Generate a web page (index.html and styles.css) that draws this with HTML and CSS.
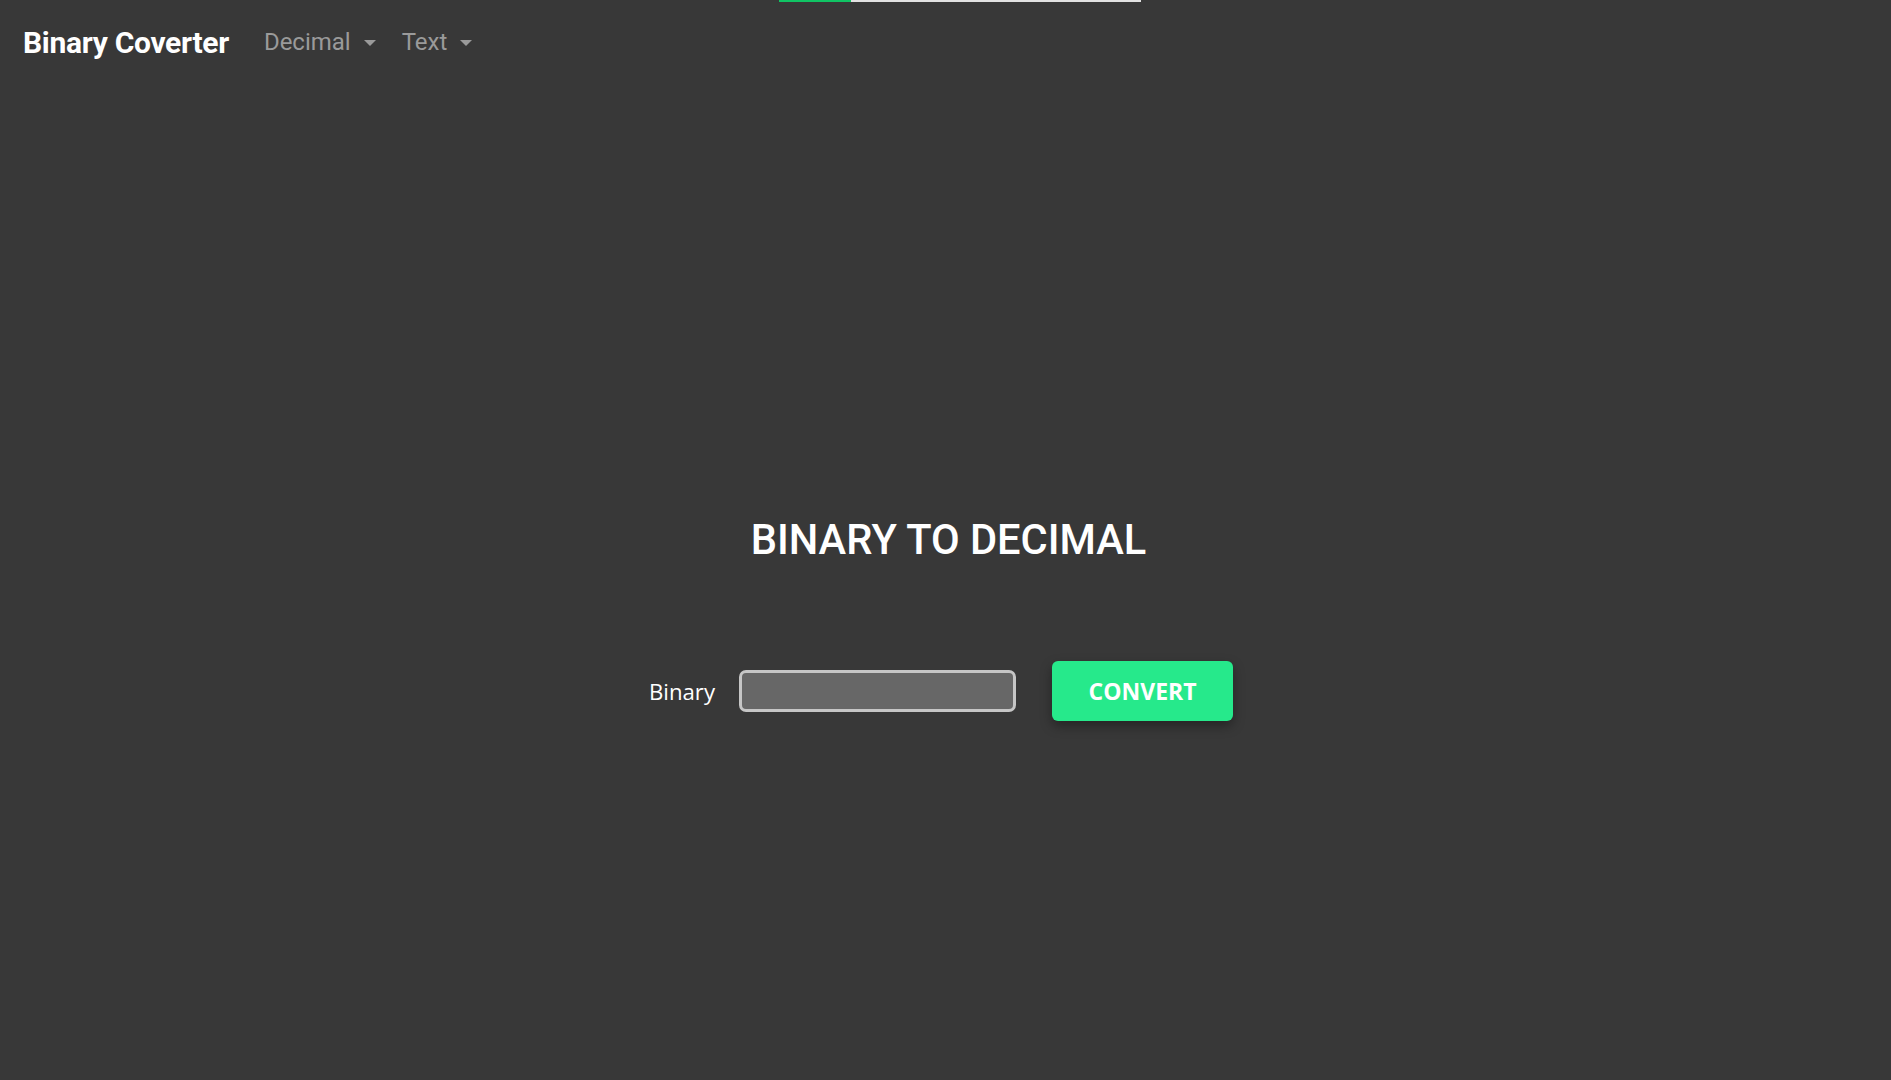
FILE: index.html
```html
<!DOCTYPE html>
<html lang="en">
<head>
<meta charset="utf-8">
<title>Binary Coverter</title>
<link rel="stylesheet" href="styles.css">
</head>
<body>
<div class="progress"><div class="progress-fill"></div></div>
<nav class="navbar">
  <a class="brand" href="#">Binary Coverter</a>
  <ul class="nav">
    <li class="nav-item"><a class="nav-link" href="#">Decimal<span class="caret"></span></a></li>
    <li class="nav-item"><a class="nav-link" href="#">Text<span class="caret"></span></a></li>
  </ul>
</nav>
<main class="main">
  <h1 class="title">BINARY TO DECIMAL</h1>
  <form class="form-row">
    <label class="label" for="bin">Binary</label>
    <input class="input" id="bin" type="text">
    <button class="btn" type="button">CONVERT</button>
  </form>
</main>
</body>
</html>
```
FILE: styles.css
```css
html, body {
  margin: 0;
  padding: 0;
  background: #383838;
  height: 100%;
}
body {
  font-family: Roboto, "Liberation Sans", sans-serif;
  color: #fff;
  overflow: hidden;
}
.progress {
  position: absolute;
  top: 0;
  left: 779px;
  width: 362px;
  height: 2px;
  background: #e2e2e2;
}
.progress-fill {
  width: 72px;
  height: 100%;
  background: #10c464;
}
.navbar {
  display: flex;
  align-items: center;
  padding: 20px 23px 18px;
}
.brand {
  font-size: 30px;
  font-weight: 700;
  line-height: 45px;
  color: #fff;
  text-decoration: none;
  letter-spacing: -0.3px;
}
.nav {
  display: flex;
  list-style: none;
  margin: 0 0 0 22px;
  padding: 0;
}
.nav-link {
  display: flex;
  align-items: center;
  font-size: 24px;
  line-height: 33px;
  color: #9a9a9a;
  text-decoration: none;
  padding: 0 13px;
}
.caret {
  display: inline-block;
  margin-left: 13px;
  width: 0;
  height: 0;
  border-top: 6px solid #9a9a9a;
  border-left: 6px solid transparent;
  border-right: 6px solid transparent;
  margin-top: 1px;
}
.main {
  display: flex;
  flex-direction: column;
  align-items: center;
  padding-top: 432px;
}
.title {
  margin: 0;
  font-size: 41.6px;
  font-weight: 500;
  line-height: 49px;
  color: #fff;
  padding-left: 6px;
}
.form-row {
  display: flex;
  align-items: center;
  margin-top: 97px;
  margin-right: 9px;
}
.label {
  font-family: "Open Sans", "Noto Sans", sans-serif;
  font-size: 22.2px;
  color: #fff;
  margin-right: 24px;
}
.input {
  box-sizing: border-box;
  width: 277px;
  height: 42px;
  background: #676767;
  border: 3px solid #c6c6c6;
  border-radius: 7px;
  outline: none;
  color: #fff;
  font-size: 18px;
  padding: 0 10px;
}
.btn {
  box-sizing: border-box;
  width: 181px;
  height: 60px;
  margin-left: 36px;
  background: #26e98b;
  border: none;
  border-radius: 6px;
  color: #fff;
  font-family: "Open Sans", "Noto Sans", sans-serif;
  font-weight: 700;
  font-size: 23px;
  box-shadow: 0 5px 12px rgba(0, 0, 0, 0.35);
  cursor: pointer;
}
```
